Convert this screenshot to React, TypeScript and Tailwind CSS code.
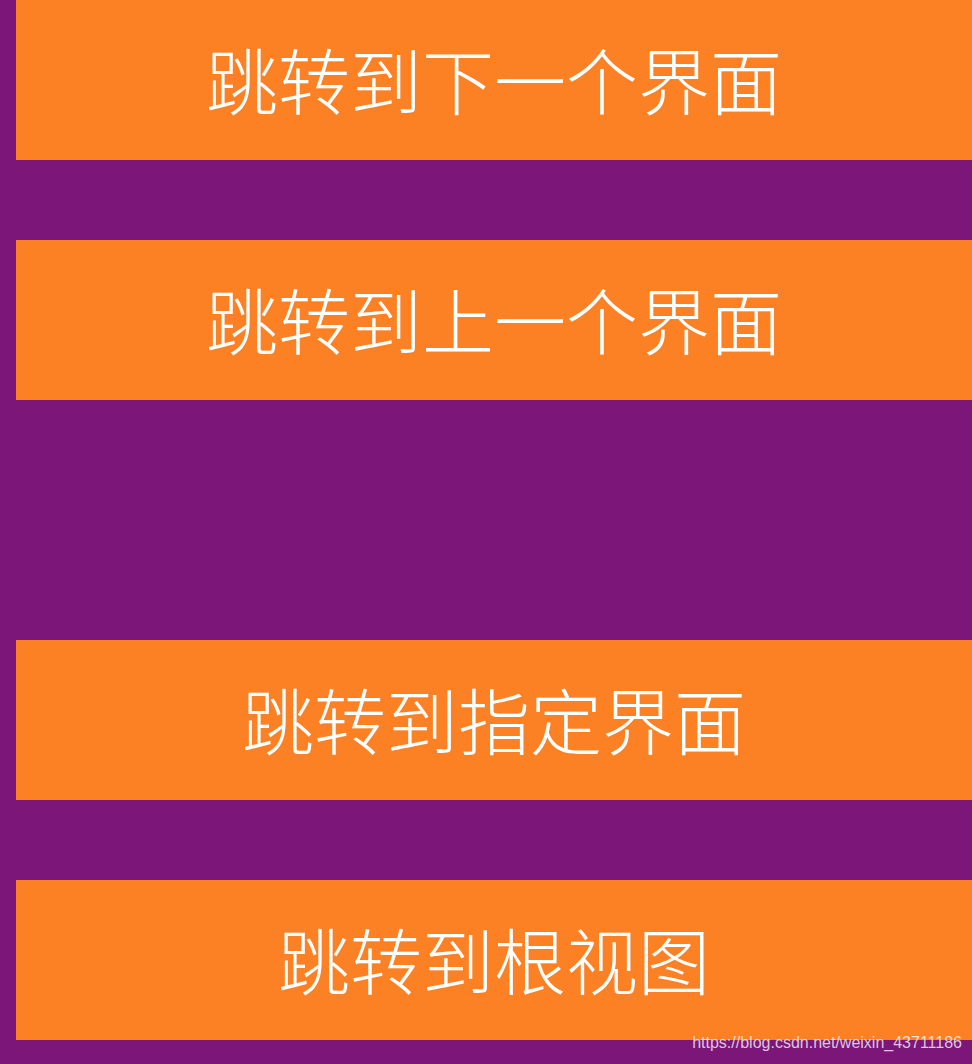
const buttons = [
  { label: "跳转到下一个界面", gapAfter: "mb-20" },
  { label: "跳转到上一个界面", gapAfter: "mb-60" },
  { label: "跳转到指定界面", gapAfter: "mb-20" },
  { label: "跳转到根视图", gapAfter: "" },
];

export default function App() {
  return (
    <div className="relative h-[1064px] w-[972px] overflow-hidden bg-[#7c1679] pl-4">
      {buttons.map((b, i) => (
        <button
          key={i}
          className={`flex h-40 w-full items-center justify-center bg-[#fc8124] pb-1 font-['Noto_Sans_CJK_SC',sans-serif] text-[72px] font-light leading-none text-white ${b.gapAfter}`}
        >
          {b.label}
        </button>
      ))}

      {/* watermark */}
      <span className="absolute right-[10px] top-[1035px] font-['Liberation_Sans',Arial,sans-serif] text-[16px] leading-none text-white/75">
        https://blog.csdn.net/weixin_43711186
      </span>
    </div>
  );
}
